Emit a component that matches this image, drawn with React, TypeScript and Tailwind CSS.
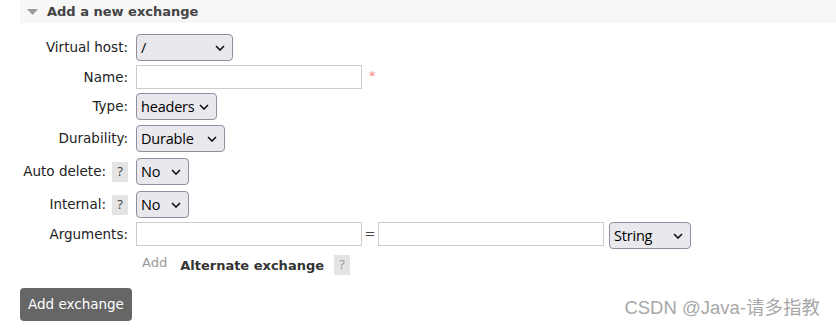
import React from 'react';

const LABEL = 'text-[13.5px] text-[#222] [font-family:"DejaVu_Sans",Verdana,sans-serif]';

function Chevron() {
  return (
    <svg width="10" height="6" viewBox="0 0 10 6" className="shrink-0">
      <path d="M1 1l4 4 4-4" fill="none" stroke="#111" strokeWidth="1.6" />
    </svg>
  );
}

function Select({ value, width }: { value: string; width: string }) {
  return (
    <div
      className={`${width} h-[27px] flex items-center justify-between pl-[4px] pr-[7px] rounded-[4px] border border-[#8f8f9d] bg-[#e9e9ed] text-[14.5px] text-black [font-family:"Open_Sans",Arial,sans-serif]`}
    >
      <span className="tracking-[-0.2px]">{value}</span>
      <Chevron />
    </div>
  );
}

function Help({ className = '' }: { className?: string }) {
  return (
    <span className={`inline-flex w-[16px] h-[20px] items-center justify-center bg-[#e4e4e4] text-[13px] text-[#444] ${className}`}>?</span>
  );
}

function Row({ label, help, h, children }: { label: string; help?: boolean; h: string; children: React.ReactNode }) {
  return (
    <div className={`flex items-start ${h}`}>
      <div className="w-[128px] h-[27px] flex items-center justify-end gap-[6px] shrink-0">
        <span className={LABEL}>{label}</span>
        {help && <Help />}
      </div>
      <div className="ml-[8px] flex items-start">{children}</div>
    </div>
  );
}

const Input = ({ w }: { w: string }) => (
  <div className={`${w} h-[24px] border border-[#ccc] bg-white`} />
);

export default function App() {
  return (
    <div className="w-[836px] h-[331px] bg-white relative overflow-hidden">
      <div className="ml-[20px] h-[23px] bg-[#f7f7f7] flex items-center">
        <svg width="12" height="8" viewBox="0 0 12 8" className="ml-[7px]">
          <path d="M0 1h11L5.5 7z" fill="#999" />
        </svg>
        <span className='ml-[8px] text-[13px] font-bold text-[#444] [font-family:"DejaVu_Sans",Verdana,sans-serif]'>
          Add a new exchange
        </span>
      </div>

      <div className="mt-[11px]">
        <Row label="Virtual host:" h="h-[31px]">
          <Select value="/" width="w-[97px]" />
        </Row>
        <div className="flex items-start h-[28px]">
          <div className="w-[128px] h-[24px] flex items-center justify-end shrink-0">
            <span className={LABEL}>Name:</span>
          </div>
          <div className="ml-[8px] flex items-start">
            <Input w="w-[226px]" />
            <span className="ml-[7px] mt-[1px] text-[13px] text-[#f88] [font-family:'DejaVu_Sans',sans-serif]">*</span>
          </div>
        </div>
        <Row label="Type:" h="h-[32px]">
          <Select value="headers" width="w-[81px]" />
        </Row>
        <Row label="Durability:" h="h-[33px]">
          <Select value="Durable" width="w-[89px]" />
        </Row>
        <Row label="Auto delete:" help h="h-[33px]">
          <Select value="No" width="w-[53px]" />
        </Row>
        <Row label="Internal:" help h="h-[31px]">
          <Select value="No" width="w-[53px]" />
        </Row>
        <div className="flex items-start h-[31px]">
          <div className="w-[128px] h-[24px] flex items-center justify-end shrink-0">
            <span className={LABEL}>Arguments:</span>
          </div>
          <div className="ml-[8px] flex items-start">
            <Input w="w-[226px]" />
            <span className='w-[16px] h-[24px] flex items-center justify-center text-[13px] text-[#444] [font-family:"DejaVu_Sans",sans-serif]'>=</span>
            <Input w="w-[226px]" />
            <div className="ml-[5px]">
              <Select value="String" width="w-[82px]" />
            </div>
          </div>
        </div>
        <div className="flex items-start ml-[142px] h-[36px]">
          <span className='text-[13px] text-[#999] [font-family:"DejaVu_Sans",Verdana,sans-serif]'>Add</span>
          <span className='ml-[13px] mt-[3px] text-[13px] font-bold text-[#333] [font-family:"DejaVu_Sans",Verdana,sans-serif]'>
            Alternate exchange
          </span>
          <Help className="ml-[10px] mt-[2px] text-[#999]" />
        </div>
      </div>

      <div className="flex items-end justify-between ml-[20px] mr-[16px] mt-[-1px]">
        <button className='h-[33px] px-[8px] rounded-[4px] bg-[#666] text-white text-[13.5px] [font-family:"DejaVu_Sans",Verdana,sans-serif]'>
          Add exchange
        </button>
        <span className='mb-[-1px] text-[18.5px] text-[#a8a8a8] [font-family:"Liberation_Sans","Noto_Sans_CJK_SC",sans-serif]'>
          CSDN @Java-请多指教
        </span>
      </div>
    </div>
  );
}
